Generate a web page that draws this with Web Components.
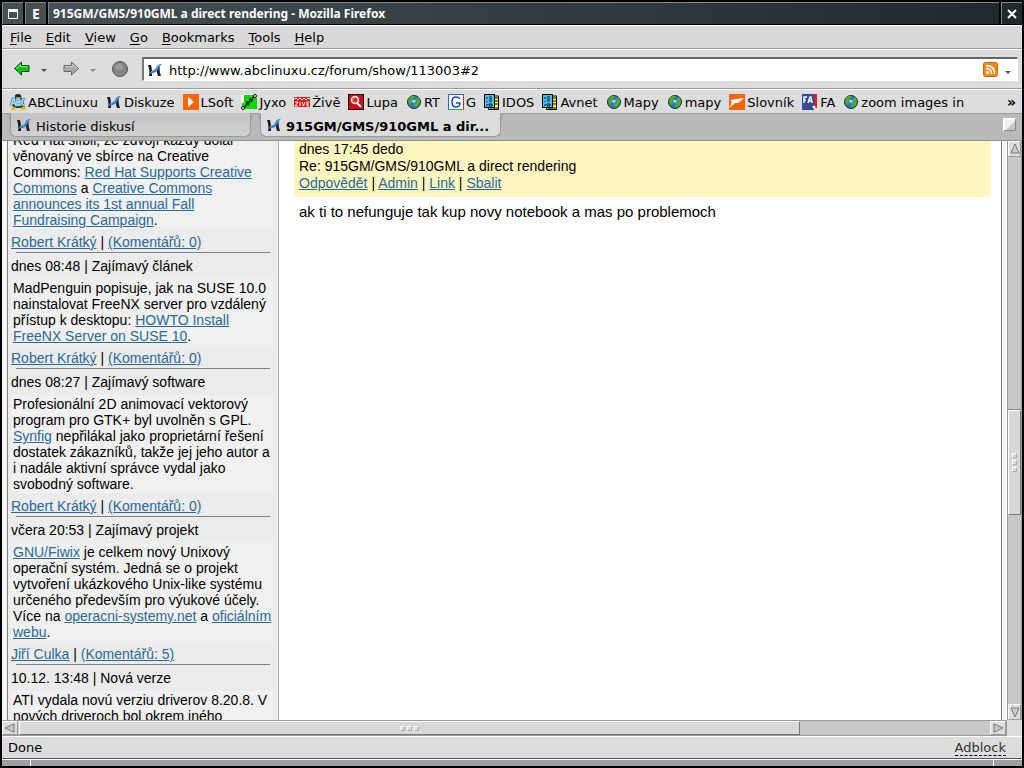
<!DOCTYPE html>
<html lang="cs">
<head>
<meta charset="utf-8">
<title>915GM/GMS/910GML a direct rendering - Mozilla Firefox</title>
<style>
    body{
        margin: 0;
        background: #000;
    }
</style>
</head>
<body>
<browser-window></browser-window>

<script>
const ICONS = {
    logo: `<path d="M1 3H4C5 6 5 11 5 14H2C3 11 2 6 1 3Z" fill="#241a1c"/><path d="M10 4 13 3C12 7 13 11 14 14H11C10 11 9 8 10 4Z" fill="#1d2530"/><path d="M15 2C11 2 10 4 9 6 7 9 4 8 2 12 5 11 8 11 10 9 12 7 12 4 15 2Z" fill="#2d7fbd"/><path d="M13 3C10 4 10 7 8 8 6 9 5 9 4 10" fill="none" stroke="#6fabd6"/>`,
    tux: `<path d="M5 1Q8-1 11 1L12 6 15 11 13 14H4L2 10 5 6Z" fill="#26241d"/><path d="M6 3H11L9 6ZM2 12 7 14 5 16H1ZM15 12 10 14 12 16H16Z" fill="#f5b51b"/><path d="M1 12 3 5H4L6 12M2 9H5M7 5V11H10V9L8 8 10 7 9 5ZM15 6Q12 4 12 8T15 11" fill="none" stroke="#3d83ad" stroke-width="3"/><path d="M1 12 3 5H4L6 12M2 9H5M7 5V11H10V9L8 8 10 7 9 5ZM15 6Q12 4 12 8T15 11" fill="none" stroke="#a9dcf0" stroke-width="1.500"/>`,
    play: `<path d="M0 0H16V16H0Z" fill="#f60"/><path d="M5 3 11 8 5 13Z" fill="#fff"/>`,
    jyxo: `<path d="M1 1H13V4H16V15H4V12H1Z" fill="#00d800"/><path d="M0 1H3V9H0ZM3 0H12V1H3Z" fill="#fff"/><path d="M2 13 5 12 6 8 8 9 9 5 11 6 12 3M5 9 8 11M8 5 11 8" fill="none" stroke="#031" stroke-width="1.500"/><circle cx="14" cy="2" r="1.500" fill="#fff" stroke="#000"/><circle cx="2" cy="14" r="1.500" fill="#fff" stroke="#000"/>`,
    zive: `<path d="M0 3H16V13H0Z" fill="#e21616"/><path d="M0 5 2 4 4 6 6 4 8 6 10 4 12 6 14 4 16 5M1 8H4L1 12H4M6 8V12M8 8 9.500 12 11 8M15 8H13V12H15M13 10H15" fill="none" stroke="#fff"/>`,
    lupa: `<path d="M0 0H16V16H0Z" fill="#200"/><path d="M1 1H15V15H1Z" fill="#cc0a10"/><circle cx="7" cy="6" r="3.500" fill="#d33" stroke="#fff" stroke-width="1.500"/><path d="M9 9 13 13" stroke="#fff" stroke-width="2"/>`,
    globe: `<circle cx="8" cy="8" r="6.500" fill="#2f78b8" stroke="#18300f"/><path d="M3 4Q6 1 9 2L7 5 5 6 6 9 4 11 2 8ZM10 4 13 4 14 8 12 12 9 13 8 10 11 8Z" fill="#4fae2f"/><path d="M6 6 10 6 9 9 6 8Z" fill="#9fd5ed"/>`,
    google: `<path d="M1 1H15V15H1Z" fill="#fff"/><path d="M.5 16V.5H16" fill="none" stroke="#2b62d0"/><path d="M15.500 1V15.500" stroke="#d22"/><path d="M1 15.500H15" stroke="#2a2"/><path d="M12 5Q11 3 8 3 4 3 4 8T8 13Q12 13 12 9H8" fill="none" stroke="#2046b8" stroke-width="1.500"/>`,
    idos: `<path d="M5 2H14.500V15.500H4.500Z" fill="#ff4" stroke="#000"/><path d="M11 4H15M11 7H15M11 10H15M6 14H14" stroke="#000"/><path d="M.5 .5H10.500V13.500H.5Z" fill="#4bbdf5" stroke="#000"/><path d="M3 3V5M5 3H8M5 5H8M3 7V8M5 7H8M3 10V12M5 10H8V12H5Z" fill="none" stroke="#023"/>`,
    slovnik: `<path d="M0 0H16V16H0Z" fill="#f8640a"/><path d="M1 6 15 4 9 9 6 9 0 14 3 8Z" fill="#fff"/>`,
    fa: `<path d="M0 0H12V16H0Z" fill="#344c98"/><path d="M12 0H15V14H12Z" fill="#d22030"/><path d="M2 9V3H5M2 6H4M6 9 8 3H9L10 9M7 7H10" fill="none" stroke="#fff" stroke-width="1.500"/><circle cx="12" cy="13" r="1.500" fill="#fff"/>`,
    feed: `<rect x=".5" y=".5" width="14" height="14" rx="2" fill="#f58a1c" stroke="#cf6010"/><circle cx="4.500" cy="10.500" r="1.500" fill="#fff"/><path d="M3 6.500Q8.500 6.500 8.500 12M3 3.500Q11.500 3.500 11.500 12" fill="none" stroke="#fff" stroke-width="1.500"/>`,
    back: `<path d="M.5 7.500 7.500 1V4.500H15V10.500H7.500V14Z" fill="#10c410" stroke="#064b06"/><path d="M2 7.500 6.500 3.500V5.500H14" fill="none" stroke="#7cf07c"/>`,
    forward: `<path d="M15.500 7.500 8.500 1V4.500H1V10.500H8.500V14Z" fill="#aaa" stroke="#666"/><path d="M2 5.500H9.500V3.500L14 7.500" fill="none" stroke="#d0d0d0"/>`,
    stop: `<circle cx="8" cy="8" r="7.500" fill="#858585" stroke="#555"/><ellipse cx="7" cy="6" rx="4" ry="3" fill="#9c9c9c"/>`,
    down: `<path d="M5 7H11L8 10Z" fill="#555"/>`,
    maximize: `<path d="M3.500 3V12.500H12.500V3" fill="none" stroke="#fff"/><path d="M3 3H13V6H3Z" fill="#fff"/>`,
    close: `<path d="M4 4 12 12M12 4 4 12" stroke="#fff" stroke-width="2"/>`,
    page: `<path d="M2 2H14V14H2Z" fill="#f0f0f0"/><path d="M13 4V13H4Z" fill="#c6c6c6"/><path d="M2 14V2H14" fill="none" stroke="#fff" stroke-width="2"/><path d="M2 13.500H13.500V2" fill="none" stroke="#888"/>`,
    up: `<path d="M4 12 8 3 12 12Z" fill="#ccc" stroke="#777"/>`,
    lower: `<path d="M4 4 8 13 12 4Z" fill="#ccc" stroke="#777"/>`,
    left: `<path d="M12 4 3 8 12 12Z" fill="#ccc" stroke="#777"/>`,
    right: `<path d="M4 4 13 8 4 12Z" fill="#ccc" stroke="#777"/>`
};

class AppIcon extends HTMLElement{
    constructor(){
        super();
        this.shadow = this.attachShadow({mode: 'open'});
    }

    connectedCallback() {
        this.shadow.innerHTML =
        `
        <style>
            :host{
                display: block;
                flex: none;
                width: 16px;
                height: 16px;
            }
            svg{
                display: block;
            }
        </style>
        <svg width="16" height="16" viewBox="0 0 16 16" aria-hidden="true">${ICONS[this.getAttribute('name')]}</svg>
        `;
    }
}
customElements.define('app-icon', AppIcon);

class TitleBar extends HTMLElement{
    constructor(){
        super();
        this.shadow = this.attachShadow({mode: 'open'});
    }

    connectedCallback() {
        this.shadow.innerHTML =
        `
        <style>
            :host{
                display: flex;
                gap: 2px;
                height: 22px;
                color: #fff;
                font: bold 12px "Noto Sans", sans-serif;
            }
            button, .title{
                box-sizing: border-box;
                border: solid #7d8688;
                border-width: 1px 0 0 1px;
                background: #465054;
                color: inherit;
            }
            button{
                display: flex;
                align-items: center;
                justify-content: center;
                width: 21px;
                padding: 0;
                font: bold 14px "Noto Sans", sans-serif;
            }
            .close{
                background: #20292d;
            }
            .title{
                flex: 1;
                padding-left: 4px;
                line-height: 21px;
                white-space: nowrap;
                background: linear-gradient(90deg, #465054, #20292d);
            }
        </style>
        <button aria-label="Maximize"><app-icon name="maximize"></app-icon></button>
        <button>E</button>
        <div class="title"><slot></slot></div>
        <button class="close" aria-label="Close"><app-icon name="close"></app-icon></button>
        `;
    }
}
customElements.define('title-bar', TitleBar);

class MenuBar extends HTMLElement{
    constructor(){
        super();
        this.shadow = this.attachShadow({mode: 'open'});
    }

    connectedCallback() {
        const items = this.getAttribute('items').split(',');
        this.shadow.innerHTML =
        `
        <style>
            :host{
                display: flex;
                gap: 14px;
                box-sizing: border-box;
                height: 24px;
                padding: 0 8px;
                border-top: 1px solid #fff;
                border-bottom: 1px solid #999;
                background: #d8d8d8;
            }
            button{
                border: 0;
                padding: 0;
                background: none;
                color: #000;
                font: inherit;
            }
            u{
                text-underline-offset: 2px;
            }
        </style>
        ${items.map(item => `<button><u>${item[0]}</u>${item.slice(1)}</button>`).join('')}
        `;
    }
}
customElements.define('menu-bar', MenuBar);

class NavBar extends HTMLElement{
    constructor(){
        super();
        this.shadow = this.attachShadow({mode: 'open'});
    }

    connectedCallback() {
        this.shadow.innerHTML =
        `
        <style>
            :host{
                display: flex;
                align-items: center;
                box-sizing: border-box;
                height: 40px;
                padding: 0 4px 0 12px;
                border-top: 1px solid #fff;
                border-bottom: 1px solid #999;
                background: #dcdcdc;
            }
            button{
                border: 0;
                padding: 0;
                background: none;
            }
            .arrow{
                margin: 2px 11px 0 6px;
            }
            .faded{
                opacity: .6;
            }
            .address{
                display: flex;
                flex: 1;
                align-items: center;
                gap: 1px;
                box-sizing: border-box;
                height: 24px;
                margin-left: 14px;
                padding: 0 1px 0 3px;
                border: solid #fff;
                border-width: 2px 1px 1px 2px;
                border-top-color: #666;
                border-left-color: #777;
                background: #fff;
            }
            .history{
                padding-top: 4px;
            }
            input{
                flex: 1;
                min-width: 0;
                border: 0;
                padding: 2px 0 0 5px;
                outline: 0;
                background: none;
                color: #000;
                font: inherit;
            }
        </style>
        <button aria-label="Back"><app-icon name="back"></app-icon></button>
        <button class="arrow" aria-label="Back history"><app-icon name="down"></app-icon></button>
        <button aria-label="Forward"><app-icon name="forward"></app-icon></button>
        <button class="arrow faded" aria-label="Forward history"><app-icon name="down"></app-icon></button>
        <button aria-label="Stop"><app-icon name="stop"></app-icon></button>
        <div class="address">
            <app-icon name="logo"></app-icon>
            <input type="text" aria-label="Address" value="${this.getAttribute('url')}">
            <button aria-label="Feed"><app-icon name="feed"></app-icon></button>
            <button class="history" aria-label="History"><app-icon name="down"></app-icon></button>
        </div>
        `;
    }
}
customElements.define('nav-bar', NavBar);

class BookmarkLink extends HTMLElement{
    constructor(){
        super();
        this.shadow = this.attachShadow({mode: 'open'});
    }

    connectedCallback() {
        this.shadow.innerHTML =
        `
        <style>
            :host{
                display: block;
                white-space: nowrap;
            }
            a{
                display: flex;
                align-items: center;
                gap: 2px;
                color: #000;
                text-decoration: none;
            }
            span{
                padding-top: 2px;
            }
        </style>
        <a href="#"><app-icon name="${this.getAttribute('icon')}"></app-icon><span><slot></slot></span></a>
        `;
    }
}
customElements.define('bookmark-link', BookmarkLink);

class BookmarksBar extends HTMLElement{
    constructor(){
        super();
        this.shadow = this.attachShadow({mode: 'open'});
    }

    connectedCallback() {
        this.shadow.innerHTML =
        `
        <style>
            :host{
                display: flex;
                align-items: center;
                gap: 8px;
                box-sizing: border-box;
                height: 24px;
                padding: 0 6px 0 8px;
                border-top: 1px solid #fff;
                background: #dcdcdc;
            }
            button{
                margin-left: auto;
                border: 0;
                padding: 0;
                background: none;
                color: #000;
                font: bold 14px "DejaVu Sans", sans-serif;
            }
        </style>
        <slot></slot>
        <button aria-label="More bookmarks">»</button>
        `;
    }
}
customElements.define('bookmarks-bar', BookmarksBar);

class PageTab extends HTMLElement{
    constructor(){
        super();
        this.shadow = this.attachShadow({mode: 'open'});
    }

    connectedCallback() {
        this.shadow.innerHTML =
        `
        <style>
            :host{
                display: block;
                position: relative;
                width: 241px;
                height: 24px;
                margin-top: -1px;
            }
            :host::before, :host::after{
                content: "";
                position: absolute;
                top: 0;
                width: 4px;
                height: 5px;
                border: solid #999;
            }
            :host::before{
                right: 100%;
                border-width: 1px 1px 0 0;
                border-top-right-radius: 5px;
            }
            :host::after{
                left: 100%;
                border-width: 1px 0 0 1px;
                border-top-left-radius: 5px;
            }
            button{
                display: flex;
                align-items: center;
                gap: 4px;
                box-sizing: border-box;
                width: 100%;
                height: 100%;
                padding: 0 5px;
                border: solid #999;
                border-width: 0 1px 1px;
                border-radius: 0 0 6px 6px;
                background: linear-gradient(#c4c4c4, #d0d0d0);
                color: #000;
                font: inherit;
            }
            span{
                padding-top: 3px;
            }
            :host([active]) button{
                background: #dcdcdc;
                font-weight: bold;
            }
        </style>
        <button><app-icon name="logo"></app-icon><span><slot></slot></span></button>
        `;
    }
}
customElements.define('page-tab', PageTab);

class TabStrip extends HTMLElement{
    constructor(){
        super();
        this.shadow = this.attachShadow({mode: 'open'});
    }

    connectedCallback() {
        this.shadow.innerHTML =
        `
        <style>
            :host{
                display: flex;
                gap: 9px;
                box-sizing: border-box;
                height: 28px;
                padding: 0 4px 0 8px;
                border-top: 1px solid #a0a0a0;
                border-bottom: 1px solid #909090;
                background: #b9b9b9;
            }
            .close{
                display: flex;
                align-items: flex-start;
                margin: 3px 0 0 auto;
                border: 0;
                padding: 0;
                background: none;
            }
        </style>
        <slot></slot>
        <button class="close" aria-label="Close tab"><app-icon name="page"></app-icon></button>
        `;
    }
}
customElements.define('tab-strip', TabStrip);

class ScrollTrack extends HTMLElement{
    constructor(){
        super();
        this.shadow = this.attachShadow({mode: 'open'});
    }

    connectedCallback() {
        const vertical = this.hasAttribute('vertical');
        this.shadow.innerHTML =
        `
        <style>
            :host{
                display: flex;
                box-sizing: border-box;
                height: 16px;
                border: solid #999;
                border-width: 1px 1px 1px 0;
                background: #c8c8c8;
            }
            :host([vertical]){
                flex-direction: column;
                width: 15px;
                height: auto;
                border-width: 0 1px;
            }
            button{
                display: flex;
                flex: none;
                align-items: center;
                justify-content: center;
                box-sizing: border-box;
                width: 16px;
                height: 14px;
                padding: 0;
                overflow: hidden;
                border: 1px solid #999;
                border-top-color: #fff;
                border-left-color: #fff;
                background: #dcdcdc;
            }
            :host([vertical]) button{
                width: 13px;
                height: 16px;
            }
            .before{
                flex: var(--before);
            }
            .after{
                flex: var(--after);
            }
            .thumb{
                display: flex;
                flex: var(--thumb);
                align-items: center;
                justify-content: center;
                gap: 2px;
                border: 1px solid #777;
                border-top-color: #fff;
                border-left-color: #fff;
                background: #d8d8d8;
            }
            :host([vertical]) .thumb{
                flex-direction: column;
                box-shadow: 0 -1px #888;
            }
            i{
                box-sizing: border-box;
                width: 5px;
                height: 5px;
                border: 1px solid #aaa;
                border-top-color: #fff;
                border-left-color: #fff;
            }
        </style>
        <button aria-label="Scroll back"><app-icon name="${vertical ? 'up' : 'left'}"></app-icon></button>
        <div class="before"></div>
        <div class="thumb"><i></i><i></i><i></i></div>
        <div class="after"></div>
        <button aria-label="Scroll forward"><app-icon name="${vertical ? 'lower' : 'right'}"></app-icon></button>
        `;
    }
}
customElements.define('scroll-track', ScrollTrack);

class NewsItem extends HTMLElement{
    constructor(){
        super();
        this.shadow = this.attachShadow({mode: 'open'});
    }

    connectedCallback() {
        const heading = this.getAttribute('heading');
        const author = this.getAttribute('author');
        this.shadow.innerHTML =
        `
        <style>
            :host{
                display: block;
                padding: 0 5px 0 3px;
                font: 14px/16px "Liberation Sans", sans-serif;
                white-space: nowrap;
            }
            .text{
                margin: 5px 0;
                padding: 1px 2px;
                background: #f0f0f0;
            }
            hr{
                height: 1px;
                margin: 2px 3px 5px 5px;
                border: 0;
                background: #808080;
            }
            a, ::slotted(a){
                color: #2a6a98;
            }
        </style>
        ${heading ? `<div>${heading}</div>` : ''}
        <div class="text"><slot></slot></div>
        ${author ? `<div><a href="#">${author}</a> | <a href="#">(Komentářů: ${this.getAttribute('comments')})</a></div><hr>` : ''}
        `;
    }
}
customElements.define('news-item', NewsItem);

class ForumPost extends HTMLElement{
    constructor(){
        super();
        this.shadow = this.attachShadow({mode: 'open'});
    }

    connectedCallback() {
        this.shadow.innerHTML =
        `
        <style>
            :host{
                display: block;
                padding: 0 10px 0 15px;
                font: 14px/17px "Liberation Sans", sans-serif;
            }
            header{
                padding: 0 5px 5px;
                background: #fff6c0;
            }
            p{
                margin: 6px 5px;
                font-size: 15px;
                line-height: 18px;
            }
            a{
                color: #2a6a98;
            }
        </style>
        <header>
            <div>${this.getAttribute('meta')}</div>
            <div>${this.getAttribute('subject')}</div>
            <div><a href="#">Odpovědět</a> | <a href="#">Admin</a> | <a href="#">Link</a> | <a href="#">Sbalit</a></div>
        </header>
        <p><slot></slot></p>
        `;
    }
}
customElements.define('forum-post', ForumPost);

class PageView extends HTMLElement{
    constructor(){
        super();
        this.shadow = this.attachShadow({mode: 'open'});
    }

    connectedCallback() {
        this.shadow.innerHTML =
        `
        <style>
            :host{
                display: flex;
                flex: 1;
                min-height: 0;
                background: #f5f5f5;
            }
            .page{
                display: flex;
                flex: 1;
                min-width: 0;
                margin: 0 5px;
                overflow: hidden;
                border: solid #808080;
                border-width: 0 1px;
                background: #fff;
            }
            aside{
                flex: none;
                width: 270px;
                border-right: 1px solid #b0b0b0;
                background: #ebebeb;
            }
            /* the column is scrolled into the middle of an item */
            .scrolled{
                margin-top: -15px;
            }
            main{
                flex: 1;
            }
            scroll-track{
                --before: 254;
                --thumb: 104;
                --after: 190;
            }
        </style>
        <div class="page">
            <aside><div class="scrolled"><slot name="news"></slot></div></aside>
            <main><slot></slot></main>
        </div>
        <scroll-track vertical></scroll-track>
        `;
    }
}
customElements.define('page-view', PageView);

class StatusBar extends HTMLElement{
    constructor(){
        super();
        this.shadow = this.attachShadow({mode: 'open'});
    }

    connectedCallback() {
        this.shadow.innerHTML =
        `
        <style>
            :host{
                display: block;
            }
            .status{
                display: flex;
                align-items: center;
                justify-content: space-between;
                box-sizing: border-box;
                height: 23px;
                padding: 0 16px 0 6px;
                border-top: 1px solid #fff;
                border-bottom: 1px solid #555;
                background: #dcdcdc;
            }
            button{
                border: 0;
                border-bottom: 1px dashed #000;
                padding: 0;
                background: none;
                color: #333;
                font: inherit;
            }
            .grip{
                display: grid;
                grid-template-columns: 28px 1fr 28px;
                gap: 1px;
                height: 6px;
                border-top: 1px solid #fff;
                background: #fff;
            }
            .grip i{
                background: #a09da2;
            }
        </style>
        <div class="status"><span><slot></slot></span><button>Adblock</button></div>
        <div class="grip"><i></i><i></i><i></i></div>
        `;
    }
}
customElements.define('status-bar', StatusBar);

class BrowserWindow extends HTMLElement{
    constructor(){
        super();
        this.shadow = this.attachShadow({mode: 'open'});
    }

    connectedCallback() {
        this.shadow.innerHTML =
        `
        <style>
            :host{
                display: flex;
                flex-direction: column;
                box-sizing: border-box;
                height: 100vh;
                padding: 2px;
                background: #000;
                color: #000;
                font: 13px "DejaVu Sans", sans-serif;
            }
            menu-bar{
                margin-top: 1px;
            }
            .horizontal{
                display: flex;
                background: #dcdcdc;
            }
            .horizontal scroll-track{
                flex: 1;
                margin-right: 15px;
                --before: 1;
                --thumb: 780;
                --after: 190;
            }
        </style>
        <title-bar>915GM/GMS/910GML a direct rendering - Mozilla Firefox</title-bar>
        <menu-bar items="File,Edit,View,Go,Bookmarks,Tools,Help"></menu-bar>
        <nav-bar url="http://www.abclinuxu.cz/forum/show/113003#2"></nav-bar>
        <bookmarks-bar>
            <bookmark-link icon="tux">ABCLinuxu</bookmark-link>
            <bookmark-link icon="logo">Diskuze</bookmark-link>
            <bookmark-link icon="play">LSoft</bookmark-link>
            <bookmark-link icon="jyxo">Jyxo</bookmark-link>
            <bookmark-link icon="zive">Živě</bookmark-link>
            <bookmark-link icon="lupa">Lupa</bookmark-link>
            <bookmark-link icon="globe">RT</bookmark-link>
            <bookmark-link icon="google">G</bookmark-link>
            <bookmark-link icon="idos">IDOS</bookmark-link>
            <bookmark-link icon="idos">Avnet</bookmark-link>
            <bookmark-link icon="globe">Mapy</bookmark-link>
            <bookmark-link icon="globe">mapy</bookmark-link>
            <bookmark-link icon="slovnik">Slovník</bookmark-link>
            <bookmark-link icon="fa">FA</bookmark-link>
            <bookmark-link icon="globe">zoom images in</bookmark-link>
        </bookmarks-bar>
        <tab-strip>
            <page-tab>Historie diskusí</page-tab>
            <page-tab active>915GM/GMS/910GML a dir...</page-tab>
        </tab-strip>
        <page-view>
            <news-item slot="news" author="Robert Krátký" comments="0">Red Hat slíbil, že zdvojí každý dolar<br>věnovaný ve sbírce na Creative<br>Commons: <a href="#">Red Hat Supports Creative<br>Commons</a> a <a href="#">Creative Commons<br>announces its 1st annual Fall<br>Fundraising Campaign</a>.</news-item>
            <news-item slot="news" heading="dnes 08:48 | Zajímavý článek" author="Robert Krátký" comments="0">MadPenguin popisuje, jak na SUSE 10.0<br>nainstalovat FreeNX server pro vzdálený<br>přístup k desktopu: <a href="#">HOWTO Install<br>FreeNX Server on SUSE 10</a>.</news-item>
            <news-item slot="news" heading="dnes 08:27 | Zajímavý software" author="Robert Krátký" comments="0">Profesionální 2D animovací vektorový<br>program pro GTK+ byl uvolněn s GPL.<br><a href="#">Synfig</a> nepřilákal jako proprietární řešení<br>dostatek zákazníků, takže jej jeho autor a<br>i nadále aktivní správce vydal jako<br>svobodný software.</news-item>
            <news-item slot="news" heading="včera 20:53 | Zajímavý projekt" author="Jiří Culka" comments="5"><a href="#">GNU/Fiwix</a> je celkem nový Unixový<br>operační systém. Jedná se o projekt<br>vytvoření ukázkového Unix-like systému<br>určeného především pro výukové účely.<br>Více na <a href="#">operacni-systemy.net</a> a <a href="#">oficiálním<br>webu</a>.</news-item>
            <news-item slot="news" heading="10.12. 13:48 | Nová verze">ATI vydala novú verziu driverov 8.20.8. V<br>nových driveroch bol okrem iného</news-item>
            <forum-post meta="dnes 17:45 dedo" subject="Re: 915GM/GMS/910GML a direct rendering">ak ti to nefunguje tak kup novy notebook a mas po problemoch</forum-post>
        </page-view>
        <div class="horizontal"><scroll-track></scroll-track></div>
        <status-bar>Done</status-bar>
        `;
    }
}
customElements.define('browser-window', BrowserWindow);
</script>
</body>
</html>
